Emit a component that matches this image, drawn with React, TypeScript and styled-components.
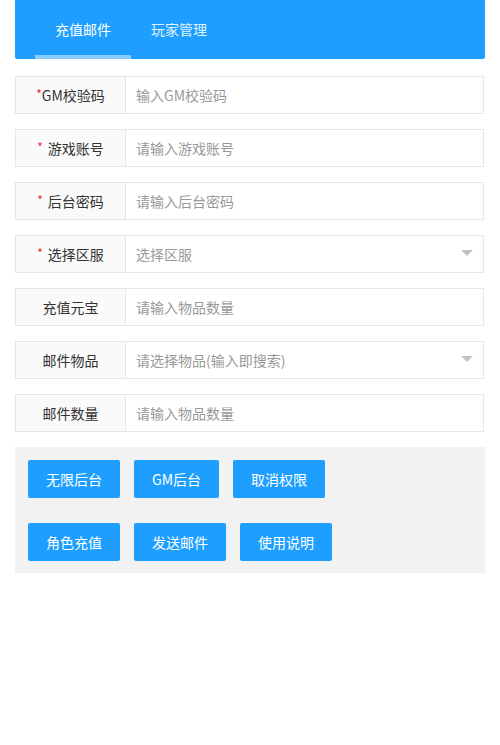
import styled, { createGlobalStyle } from "styled-components";
import { useState } from "react";

const GlobalStyle = createGlobalStyle`
  html, body {
    margin: 0;
    padding: 0;
    background: #fff;
    font-family: "Noto Sans CJK SC", "Noto Sans", "Liberation Sans", sans-serif;
    font-size: 14px;
    color: #333;
  }
  * {
    box-sizing: border-box;
  }
`;

const Page = styled.div`
  padding: 0 15px;
  width: 500px;
`;

const TabBar = styled.div`
  display: flex;
  height: 59px;
  padding-left: 20px;
  background: #1e9fff;
  border-radius: 0 0 2px 2px;
`;

const TabItem = styled.div<{ $active?: boolean }>`
  display: flex;
  align-items: center;
  justify-content: center;
  height: 100%;
  padding: 4px 20px 2px;
  font-size: 14px;
  color: ${(p) => (p.$active ? "#fff" : "rgba(255,255,255,0.88)")};
  border-bottom: 4px solid ${(p) => (p.$active ? "#8acbff" : "transparent")};
  cursor: pointer;
`;

const Form = styled.div`
  display: flex;
  flex-direction: column;
  gap: 15px;
  margin-top: 17px;
`;

const Row = styled.div`
  display: flex;
  height: 38px;
  width: 469px;
`;

const Label = styled.label`
  display: flex;
  align-items: center;
  justify-content: center;
  width: 110px;
  flex: none;
  background: #fafafa;
  border: 1px solid #e6e6e6;
  border-right: none;
  color: #333;
  font-size: 14px;
`;

const Star = styled.span<{ $spaced?: boolean }>`
  color: #f5222d;
  font-size: 12px;
  align-self: flex-start;
  margin-top: 8px;
  margin-right: ${(p) => (p.$spaced ? "5px" : "0")};
`;

const Field = styled.div`
  position: relative;
  flex: 1;
  display: flex;
`;

const Input = styled.input`
  flex: 1;
  width: 100%;
  height: 100%;
  border: 1px solid #e6e6e6;
  padding: 0 30px 0 10px;
  font-family: inherit;
  font-size: 14px;
  color: #333;
  outline: none;
  background: #fff;
  &::placeholder {
    color: #999;
  }
`;

const Arrow = styled.i`
  position: absolute;
  right: 11px;
  top: 15px;
  width: 0;
  height: 0;
  border-style: solid;
  border-width: 6px 6px 0;
  border-color: #c2c2c2 transparent transparent;
  pointer-events: none;
`;

const Panel = styled.div`
  margin-top: 15px;
  background: #f2f2f2;
  padding: 13px 13px 12px;
  display: flex;
  flex-direction: column;
  gap: 25px;
  width: 470px;
`;

const BtnRow = styled.div`
  display: flex;
  gap: 14px;
`;

const Btn = styled.button`
  height: 38px;
  padding: 0 18px;
  border: none;
  border-radius: 2px;
  background: #1e9fff;
  color: #fff;
  font-family: inherit;
  font-size: 14px;
  white-space: nowrap;
  cursor: pointer;
`;

type FieldDef = {
  label: string;
  placeholder: string;
  required?: boolean;
  spaced?: boolean;
  select?: boolean;
};

const fields: FieldDef[] = [
  { label: "GM校验码", placeholder: "输入GM校验码", required: true },
  { label: "游戏账号", placeholder: "请输入游戏账号", required: true, spaced: true },
  { label: "后台密码", placeholder: "请输入后台密码", required: true, spaced: true },
  { label: "选择区服", placeholder: "选择区服", required: true, spaced: true, select: true },
  { label: "充值元宝", placeholder: "请输入物品数量" },
  { label: "邮件物品", placeholder: "请选择物品(输入即搜索)", select: true },
  { label: "邮件数量", placeholder: "请输入物品数量" },
];

export default function App() {
  const [tab, setTab] = useState(0);
  return (
    <Page>
      <GlobalStyle />
      <TabBar>
        {["充值邮件", "玩家管理"].map((t, i) => (
          <TabItem key={t} $active={tab === i} onClick={() => setTab(i)}>
            {t}
          </TabItem>
        ))}
      </TabBar>
      <Form>
        {fields.map((f) => (
          <Row key={f.label}>
            <Label>
              {f.required && <Star $spaced={f.spaced}>*</Star>}
              {f.label}
            </Label>
            <Field>
              <Input placeholder={f.placeholder} readOnly={f.select} />
              {f.select && <Arrow />}
            </Field>
          </Row>
        ))}
      </Form>
      <Panel>
        <BtnRow>
          <Btn>无限后台</Btn>
          <Btn>GM后台</Btn>
          <Btn>取消权限</Btn>
        </BtnRow>
        <BtnRow>
          <Btn>角色充值</Btn>
          <Btn>发送邮件</Btn>
          <Btn>使用说明</Btn>
        </BtnRow>
      </Panel>
    </Page>
  );
}
